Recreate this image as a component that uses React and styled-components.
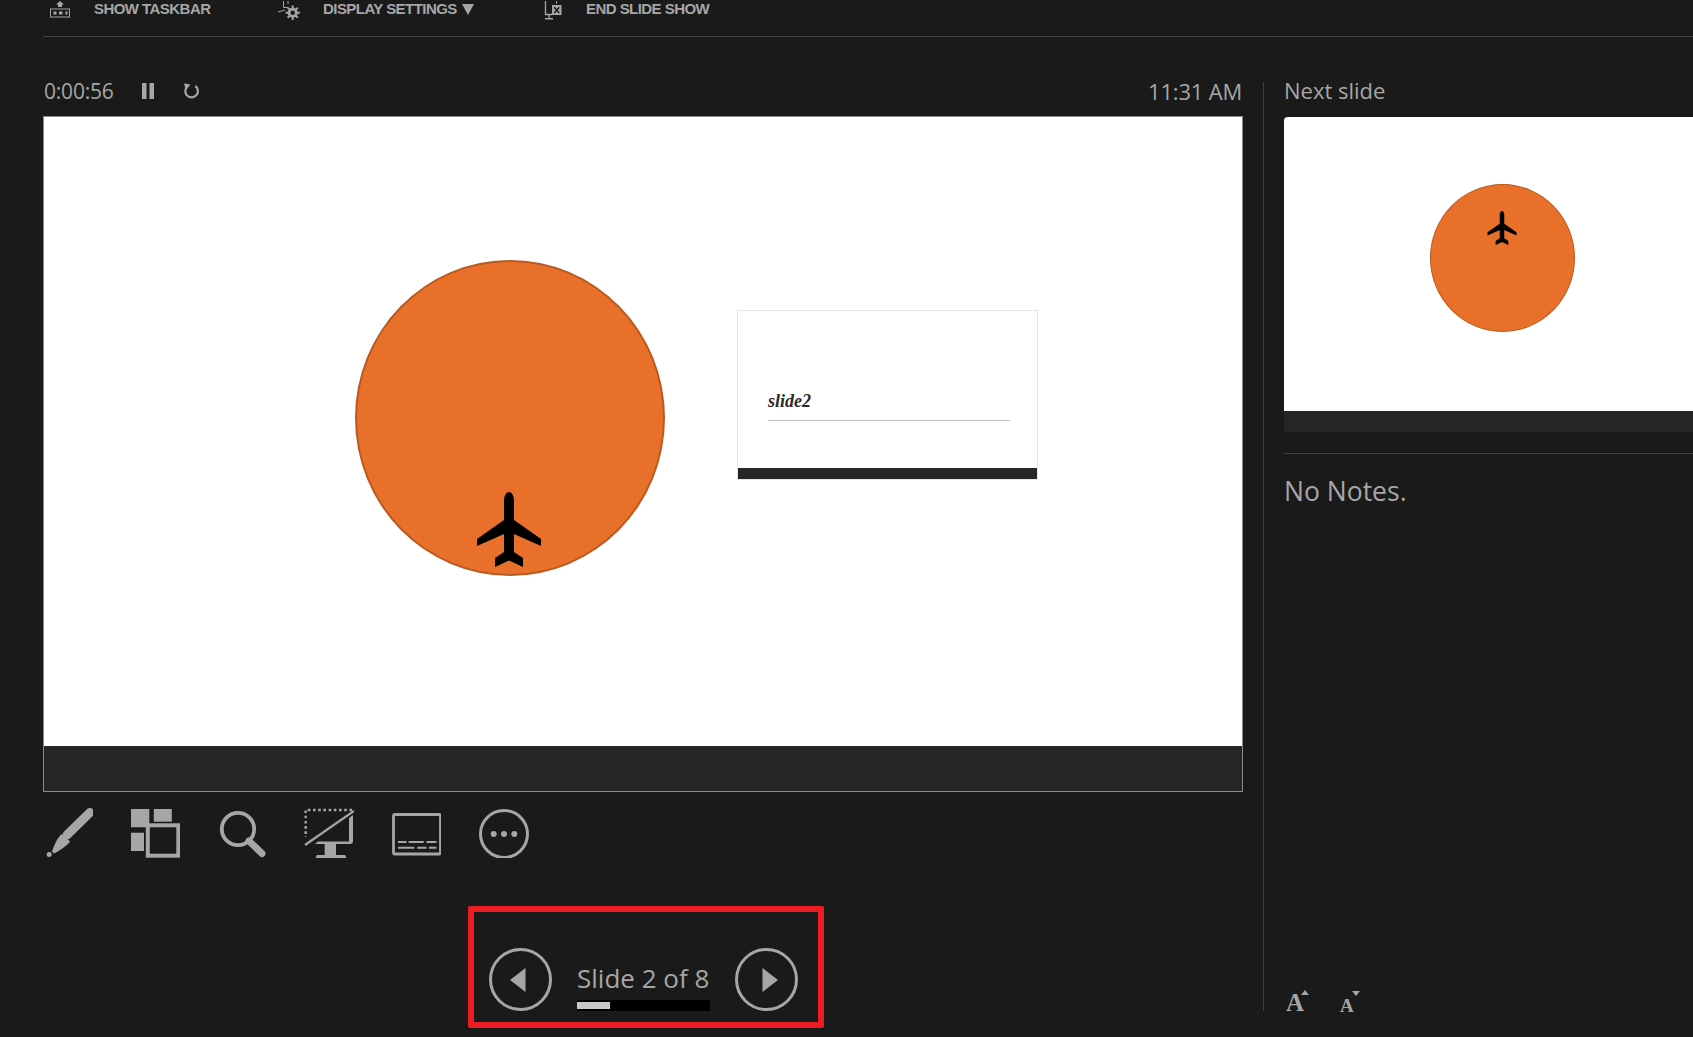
import React from 'react'
import styled, {createGlobalStyle} from 'styled-components'

const GlobalStyle = createGlobalStyle`
  html, body {
    margin: 0;
    padding: 0;
    background: #1a1a1a;
    overflow: hidden;
  }
  * {
    box-sizing: border-box;
  }
`

const PLANE = 'M32 0C35 0 37 4 37 9V28L64 47V54L37 42V60L46 66V75L32 68.5L18 75V66L27 60V42L0 54V47L27 28V9C27 4 29 0 32 0Z'

function Plane({className}) {
  return (
    <svg className={className} viewBox="0 0 64 75">
      <path d={PLANE} fill="#000" />
    </svg>
  )
}

function TaskbarIcon() {
  return (
    <TopIcon viewBox="0 0 20 18">
      <path d="M10 0L14 3.500H12V6H8V3.500H6Z" fill="#a6a6a6" />
      <rect x="0.500" y="8" width="19" height="8" fill="none" stroke="#a6a6a6" />
      <path d="M3.500 10.500h3v3h-3zM9 10.500h3.500v3H9zM15.500 10.500h2v3h-2z" fill="#a6a6a6" />
    </TopIcon>
  )
}

function DisplayIcon() {
  return (
    <TopIcon viewBox="0 0 20 18">
      <path d="M3.500 0V6.500H8M8 0V3M-2 11L5 9" stroke="#a6a6a6" fill="none" />
      <circle cx="12.700" cy="11.700" r="5" fill="#a6a6a6" />
      <path d="M12.700 4.500v14.400M5.500 11.700h14.400M7.600 6.600l10.200 10.200M17.800 6.600L7.600 16.800" stroke="#a6a6a6" strokeWidth="2" />
      <circle cx="12.700" cy="11.700" r="2.200" fill="#1a1a1a" />
    </TopIcon>
  )
}

function EndIcon() {
  return (
    <TopIcon viewBox="0 0 20 18">
      <path d="M2.500 0V13.500H9M6 13.500V17" stroke="#a6a6a6" fill="none" strokeWidth="1.300" />
      <path d="M2 17H10V18.500H2Z" fill="#a6a6a6" />
      <rect x="9" y="4" width="9.500" height="10" fill="#a6a6a6" />
      <path d="M11.200 6.200L16.300 12M16.300 6.200L11.200 12" stroke="#1a1a1a" strokeWidth="1.500" />
      <path d="M13.500 0V2.500" stroke="#a6a6a6" />
    </TopIcon>
  )
}

function PenIcon() {
  return (
    <svg width="50" height="50" viewBox="0 0 50 50">
      <path d="M47 4.500L24 27" stroke="#a6a6a6" strokeWidth="9" strokeLinecap="round" fill="none" />
      <path d="M18.500 26L27 33.500C24 38 16 43 11 45.500L9 43.500C11 37 14.500 30 18.500 26Z" fill="#a6a6a6" />
      <circle cx="6.200" cy="46.500" r="2.500" fill="#a6a6a6" />
    </svg>
  )
}

function TilesIcon() {
  return (
    <svg width="50" height="50" viewBox="0 0 50 50" fill="#a6a6a6">
      <rect x="1" y="1" width="18.300" height="18.300" />
      <rect x="23.800" y="1" width="18" height="12.700" />
      <rect x="1" y="24.700" width="13" height="18.300" />
      <rect x="17.800" y="17.300" width="30.500" height="30.400" fill="none" stroke="#a6a6a6" strokeWidth="4" />
    </svg>
  )
}

function SearchIcon() {
  return (
    <svg width="50" height="50" viewBox="0 0 50 50" fill="none" stroke="#a6a6a6">
      <circle cx="21" cy="21" r="16.200" strokeWidth="3.800" />
      <path d="M32 33L45 45.500" strokeWidth="7" strokeLinecap="round" />
    </svg>
  )
}

function MonitorOffIcon() {
  return (
    <svg width="50" height="50" viewBox="0 0 50 50" fill="none" stroke="#a6a6a6">
      <path d="M48 2H1.700V29" strokeWidth="2.400" strokeDasharray="2.600 2.600" />
      <path d="M1 37L50 3" strokeWidth="2.200" />
      <path d="M45 10L49 7V33C49 35 48 36 46 36H11L14 33.500H45Z" fill="#a6a6a6" stroke="none" />
      <path d="M20.700 36H32V47H41L43 51H11L13 47H20.700Z" fill="#a6a6a6" stroke="none" />
    </svg>
  )
}

function SubtitleIcon() {
  return (
    <svg width="50" height="50" viewBox="0 0 50 50" fill="none" stroke="#a6a6a6">
      <rect x="2.500" y="6.500" width="47" height="39.500" rx="1.500" strokeWidth="2.800" />
      <path d="M7 34H15.500M17.600 34H32.700M35.500 34H45.500M7 39.700H23.400M26.200 39.700H35.500M37.900 39.700H45.500" strokeWidth="2" />
    </svg>
  )
}

function MoreIcon() {
  return (
    <svg width="52" height="50" viewBox="0 0 52 50" fill="none" stroke="#a6a6a6">
      <circle cx="26" cy="26" r="23.500" strokeWidth="3" />
      <circle cx="15.700" cy="26" r="3" fill="#a6a6a6" stroke="none" />
      <circle cx="26" cy="26" r="3" fill="#a6a6a6" stroke="none" />
      <circle cx="36.300" cy="26" r="3" fill="#a6a6a6" stroke="none" />
    </svg>
  )
}

export default function App() {
  return (
    <Page>
      <GlobalStyle />
      <TopBar>
        <TopItem $width={280 - 50} $gap={24}>
          <TaskbarIcon />
          <TopLabel>SHOW TASKBAR</TopLabel>
        </TopItem>
        <TopItem $width={543 - 280} $gap={23}>
          <DisplayIcon />
          <TopLabel>
            DISPLAY SETTINGS
            <Caret />
          </TopLabel>
        </TopItem>
        <TopItem $gap={23}>
          <EndIcon />
          <TopLabel>END SLIDE SHOW</TopLabel>
        </TopItem>
      </TopBar>

      <Columns>
        <Presenter>
          <TimerRow>
            <Clock>0:00:56</Clock>
            <TimerButton width="12" height="16" viewBox="0 0 12 16" $gap={29}>
              <path d="M0 0h4.500v16H0zM7.500 0H12v16H7.500z" fill="#a6a6a6" />
            </TimerButton>
            <TimerButton width="16" height="16" viewBox="0 0 16 16" $gap={29}>
              <path d="M3.800 4A6.300 6.300 0 1 0 12.300 3" fill="none" stroke="#a6a6a6" strokeWidth="2.200" />
              <path d="M1 0.500L7.500 1.500L3 7Z" fill="#a6a6a6" />
            </TimerButton>
            <Time>11:31 AM</Time>
          </TimerRow>

          <CurrentSlide>
            <Canvas $height={629}>
              <Circle $left={311} $top={143} $width={310} $height={316} $stroke={2}>
                <CurrentPlane />
              </Circle>
              <TitleCard>
                <CardBody>
                  <CardTitle>slide2</CardTitle>
                  <CardRule />
                </CardBody>
                <CardBar />
              </TitleCard>
            </Canvas>
            <SlideFooter $height={46} />
          </CurrentSlide>

          <Toolbar>
            <PenIcon />
            <TilesIcon />
            <SearchIcon />
            <MonitorOffIcon />
            <SubtitleIcon />
            <MoreIcon />
          </Toolbar>

          <SlideNav>
            <NavButton $shift={-3}>
              <svg width="16" height="24" viewBox="0 0 16 24">
                <path d="M15.500 0V24L0 12Z" fill="#a6a6a6" />
              </svg>
            </NavButton>
            <SlideCount>
              <CountLabel>Slide 2 of 8</CountLabel>
              <Progress>
                <ProgressFill style={{width: `${(2 / 8) * 100}%`}} />
              </Progress>
            </SlideCount>
            <NavButton $shift={3}>
              <svg width="16" height="24" viewBox="0 0 16 24">
                <path d="M0.500 0V24L16 12Z" fill="#a6a6a6" />
              </svg>
            </NavButton>
          </SlideNav>
        </Presenter>

        <ColumnRule />

        <NotesColumn>
          <NextLabel>Next slide</NextLabel>
          <NextSlide>
            <Canvas $height={294}>
              <Circle $left={146} $top={67} $width={145} $height={148} $stroke={1}>
                <NextPlane />
              </Circle>
            </Canvas>
            <SlideFooter $height={21} />
          </NextSlide>
          <NotesRule />
          <Notes>No Notes.</Notes>
          <FontControls>
            <FontButton $size={25} $width={54}>
              A
              <Arrow $up />
            </FontButton>
            <FontButton $size={19}>
              A
              <Arrow />
            </FontButton>
          </FontControls>
        </NotesColumn>
      </Columns>
    </Page>
  )
}

const Page = styled.div`
  width: 1693px;
  height: 1037px;
  background: #1a1a1a;
  color: #a6a6a6;
  font-family: "Open Sans", "Noto Sans", sans-serif;
  font-weight: 400;
  overflow: hidden;
`

const TopBar = styled.div`
  display: flex;
  align-items: flex-start;
  height: 37px;
  margin-left: 43px;
  padding-left: 7px;
  border-bottom: 1px solid #444;
`

const TopItem = styled.div`
  display: flex;
  align-items: flex-start;
  gap: ${props => props.$gap}px;
  ${props => props.$width && `width: ${props.$width}px;`}
`

const TopIcon = styled.svg`
  width: 20px;
  height: 18px;
  margin-top: 1px;
  flex: none;
  overflow: visible;
`

const TopLabel = styled.span`
  display: flex;
  align-items: center;
  height: 18px;
  font-family: "Liberation Sans", Arial, sans-serif;
  font-size: 15px;
  font-weight: 700;
  line-height: 18px;
  letter-spacing: -0.55px;
`

const Caret = styled.i`
  width: 0;
  height: 0;
  margin-left: 5px;
  border-left: 6px solid transparent;
  border-right: 6px solid transparent;
  border-top: 11px solid #a6a6a6;
`

const Columns = styled.div`
  display: flex;
  padding: 45px 0 0 43px;
`

const Presenter = styled.div`
  width: 1200px;
  flex: none;
`

const TimerRow = styled.div`
  display: flex;
  align-items: center;
  height: 34px;
  padding-bottom: 16px;
`

const Clock = styled.span`
  font-size: 21px;
  line-height: 18px;
  width: 99px;
  padding-left: 1px;
  letter-spacing: -0.2px;
`

const Time = styled(Clock)`
  width: auto;
  margin-left: auto;
  padding-right: 1px;
  font-size: 22px;
`

const TimerButton = styled.svg`
  flex: none;
  margin-right: ${props => props.$gap}px;
`

const CurrentSlide = styled.div`
  display: flex;
  flex-direction: column;
  height: 676px;
  border: 1px solid #8a8a8a;
  overflow: hidden;
`

const Canvas = styled.div`
  position: relative;
  height: ${props => props.$height}px;
  flex: none;
  background: #fff;
`

const SlideFooter = styled.div`
  height: ${props => props.$height}px;
  flex: none;
  background: #262626;
`

const Circle = styled.div`
  position: absolute;
  left: ${props => props.$left}px;
  top: ${props => props.$top}px;
  width: ${props => props.$width}px;
  height: ${props => props.$height}px;
  border-radius: 50%;
  background: #e8702a;
  border: ${props => props.$stroke}px solid #b95a20;
`

const CurrentPlane = styled(Plane)`
  position: absolute;
  left: 120px;
  top: 230px;
  width: 64px;
  height: 75px;
`

const NextPlane = styled(Plane)`
  position: absolute;
  left: 56px;
  top: 26px;
  width: 30px;
  height: 34px;
`

const TitleCard = styled.div`
  position: absolute;
  left: 693px;
  top: 193px;
  width: 301px;
  height: 170px;
  display: flex;
  flex-direction: column;
  border: 1px solid #e6e6e6;
`

const CardBody = styled.div`
  flex: 1;
  padding: 79px 27px 0 30px;
`

const CardTitle = styled.div`
  font-family: "Liberation Serif", serif;
  font-style: italic;
  font-weight: 700;
  font-size: 18px;
  line-height: 22px;
  color: #2b2b2b;
  height: 30px;
`

const CardRule = styled.div`
  height: 1px;
  background: #c4c4c4;
`

const CardBar = styled.div`
  height: 11px;
  background: #262626;
`

const Toolbar = styled.div`
  display: flex;
  gap: 37px;
  margin-top: 16px;
`

const SlideNav = styled.div`
  display: flex;
  align-items: flex-start;
  width: 356px;
  height: 122px;
  margin: 48px 0 0 425px;
  padding: 36px 0 0 15px;
  border: 6px solid #ed1c24;
  border-radius: 2px;
`

const NavButton = styled.div`
  display: flex;
  align-items: center;
  justify-content: center;
  width: 63px;
  height: 63px;
  flex: none;
  border: 3px solid #a6a6a6;
  border-radius: 50%;

  svg {
    transform: translateX(${props => props.$shift}px);
  }
`

const SlideCount = styled.div`
  width: 133px;
  margin: 0 25px;
`

const CountLabel = styled.div`
  font-size: 26px;
  line-height: 34px;
  margin-top: 13px;
  margin-bottom: -3px;
  white-space: nowrap;
`

const Progress = styled.div`
  height: 11px;
  margin-top: 8px;
  padding: 2px 0;
  background: #000;
`

const ProgressFill = styled.div`
  height: 100%;
  background: #c8c8c8;
`

const ColumnRule = styled.div`
  width: 1px;
  height: 929px;
  flex: none;
  margin-left: 20px;
  background: #3f3f3f;
`

const NotesColumn = styled.div`
  display: flex;
  flex-direction: column;
  width: 409px;
  height: 929px;
  flex: none;
  margin-left: 20px;
`

const NextLabel = styled.div`
  font-size: 22px;
  line-height: 17px;
  height: 35px;
`

const NextSlide = styled.div`
  width: 600px;
  height: 315px;
  flex: none;
  border-radius: 4px;
  overflow: hidden;
`

const NotesRule = styled.div`
  height: 1px;
  flex: none;
  margin-top: 21px;
  background: #444;
`

const Notes = styled.div`
  margin-top: 19px;
  font-size: 26.5px;
  line-height: 36px;
`

const FontControls = styled.div`
  display: flex;
  align-items: flex-end;
  margin-top: auto;
  margin-bottom: -4px;
  padding-left: 2px;
`

const FontButton = styled.div`
  position: relative;
  width: ${props => props.$width || 30}px;
  font-family: "Liberation Serif", serif;
  font-weight: 700;
  font-size: ${props => props.$size}px;
  line-height: 1;
`

const Arrow = styled.i`
  position: absolute;
  left: ${props => (props.$up ? 15 : 12)}px;
  top: ${props => (props.$up ? 0 : -5)}px;
  width: 0;
  height: 0;
  border-left: 4px solid transparent;
  border-right: 4px solid transparent;
  ${props => (props.$up ? 'border-bottom: 5px solid #a6a6a6;' : 'border-top: 5px solid #a6a6a6;')}
`
